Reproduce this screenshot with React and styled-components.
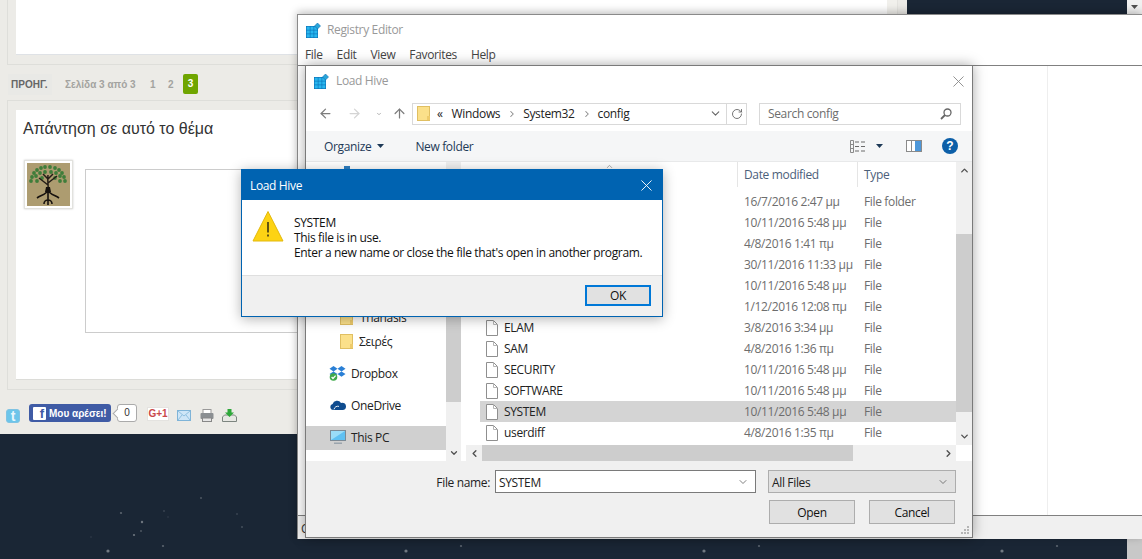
import React from "react";
import styled, { createGlobalStyle } from "styled-components";
import { ArrowLeft, ArrowRight, ArrowUp, ChevronDown, ChevronUp, ChevronLeft, ChevronRight, RotateCw } from "lucide-react";

const UI = `"Open Sans", "Noto Sans", sans-serif`;
const WEB = `"Liberation Sans", Arial, sans-serif`;

const GlobalStyle = createGlobalStyle`
  html, body { margin: 0; padding: 0; background: #1a2635; }
  * { box-sizing: border-box; }
`;

const Stage = styled.div`
  position: relative;
  width: 1142px;
  height: 559px;
  overflow: hidden;
  display: flex;
  background: #1a2635;
  font-family: ${UI};
`;

const PageColumn = styled.div`
  flex: 1;
  display: flex;
  flex-direction: column;
`;

const TopArea = styled.div`
  display: flex;
  height: 434px;
`;

const Forum = styled.div`
  width: 887px;
  background: #ecebe7;
  font-family: ${WEB};
  display: flex;
  flex-direction: column;
`;

const SideStrip = styled.div`
  width: 20px;
  background: linear-gradient(to right, #f1f0ec 0 10px, #e4e3df 10px 11px, #ecebe7 11px);
`;

const StarBand = styled.div`
  flex: 1;
  position: relative;
`;

const PageScroll = styled.div`
  width: 15px;
  background: #f1f1f1;
  display: flex;
  flex-direction: column;
  justify-content: space-between;
`;

const ScrollTip = styled.div`
  height: 14px;
  display: flex;
  align-items: center;
  justify-content: center;
`;

const ScrollEnd = styled.div`
  height: 20px;
  background: #c8c8c8;
`;

const OuterTop = styled.div`
  margin-left: 7px;
  height: 65px;
  padding: 0 0 9px 8px;
  border-left: 1px solid #dededa;
  border-bottom: 1px solid #dededa;
`;

const WhiteCard = styled.div`
  height: 100%;
  background: #fff;
  border-bottom: 1px solid #dfe2e6;
`;

const Pager = styled.div`
  height: 35px;
  display: flex;
  align-items: center;
  font-size: 10px;
  font-weight: bold;
  color: #a3a3a0;
  padding-top: 3px;
`;

const PrevLink = styled.span`
  margin-left: 8px;
  padding: 5px 3px;
  width: 44px;
  color: #666;
  background: #e9e9e6;
  white-space: nowrap;
`;

const PageLabel = styled.span`
  margin-left: 13px;
  width: 85px;
`;

const PageNum = styled.span`
  width: 18px;
`;

const CurrentPage = styled.span`
  width: 15px;
  height: 20px;
  margin-left: -3px;
  border-radius: 2px;
  background: #6fa500;
  color: #fff;
  display: flex;
  align-items: center;
  justify-content: center;
  margin-top: -1px;
`;

const OuterReply = styled.div`
  margin-left: 7px;
  height: 290px;
  padding: 9px 0 9px 8px;
  border: 1px solid #dededa;
  border-right: 0;
`;

const ReplyCard = styled.div`
  height: 100%;
  background: #fff;
  border-bottom: 1px solid #dcdcd8;
  padding: 9px 0 0 7px;
`;

const ReplyTitle = styled.div`
  font-size: 16px;
  line-height: 20px;
  color: #333;
`;

const ReplyBody = styled.div`
  display: flex;
  margin-top: 21px;
  margin-left: 1px;
`;

const Avatar = styled.div`
  width: 49px;
  height: 49px;
  padding: 2px;
  background: #fff;
  border: 1px solid #e2e2de;
  box-shadow: 0 0 2px rgba(0, 0, 0, 0.2);
  svg { display: block; }
`;

const Editor = styled.div`
  width: 700px;
  height: 164px;
  margin: 9px 0 0 12px;
  background: #fff;
  border: 1px solid #ccc;
`;

const ShareRow = styled.div`
  display: flex;
  align-items: flex-start;
  padding: 14px 0 0 6px;
`;

const ShareIcon = styled.div`
  margin-left: ${(p) => p.$gap || 0}px;
  margin-top: ${(p) => p.$top || 0}px;
  display: flex;
  svg { display: block; }
`;

const TwitterIcon = styled.div`
  width: 14px;
  height: 14px;
  margin-top: 5px;
  border: 1px solid #7fc3e3;
  border-radius: 3px;
  background: #6cc5ea;
  color: #e8f7fd;
  font-size: 14px;
  font-weight: bold;
  line-height: 12px;
  text-align: center;
`;

const LikeButton = styled.div`
  width: 82px;
  height: 18px;
  margin-left: 9px;
  padding-left: 4px;
  border-radius: 3px;
  background: #3f5ba5;
  color: #fff;
  font-size: 10px;
  font-weight: bold;
  display: flex;
  align-items: center;
  gap: 3px;
  white-space: nowrap;
`;

const LikeBox = styled.span`
  width: 13px;
  height: 13px;
  border-radius: 1px;
  background: #fff;
  color: #3f5ba5;
  font-size: 13px;
  line-height: 14px;
  text-align: right;
  padding-right: 2px;
`;

const LikeCount = styled.div`
  position: relative;
  width: 20px;
  height: 18px;
  margin-left: 6px;
  border: 1px solid #aaa;
  border-radius: 3px;
  background: #fff;
  font-size: 10px;
  color: #333;
  text-align: center;
  line-height: 16px;
  &::before {
    content: "";
    position: absolute;
    left: -4px;
    top: 5px;
    width: 6px;
    height: 6px;
    background: #fff;
    border-left: 1px solid #aaa;
    border-bottom: 1px solid #aaa;
    transform: rotate(45deg);
  }
`;

const PlusOne = styled.div`
  width: 22px;
  height: 14px;
  margin: 3px 0 0 10px;
  background: #fff;
  border: 1px solid #e4e3e0;
  color: #c9484a;
  font-size: 10px;
  font-weight: bold;
  line-height: 12px;
  text-align: center;
  white-space: nowrap;
`;

const Win = styled.div`
  position: absolute;
  left: ${(p) => p.$x}px;
  top: ${(p) => p.$y}px;
  width: ${(p) => p.$w}px;
  height: ${(p) => p.$h}px;
  display: flex;
  flex-direction: column;
  background: #fff;
  font-size: 12px;
  letter-spacing: -0.35px;
  color: #1a1a1a;
`;

const RegistryWin = styled(Win)`
  border-top: 1px solid #8a8a8a;
  border-left: 1px solid #8a8a8a;
  box-shadow: 0 -2px 8px rgba(0, 0, 0, 0.25);
`;

const DialogWin = styled(Win)`
  border: 1px solid #7a7a7a;
  box-shadow: 0 0 12px rgba(0, 0, 0, 0.35);
`;

const MessageWin = styled(Win)`
  border: 1px solid #0063b1;
  box-shadow: 0 2px 12px rgba(0, 0, 0, 0.3);
`;

const TitleText = styled.span`
  margin-bottom: 2px;
`;

const RegTitle = styled.div`
  height: 30px;
  padding-left: 8px;
  display: flex;
  align-items: center;
  gap: 6px;
  color: #999;
`;

const MenuBar = styled.div`
  height: 20px;
  padding: 0 0 2px 7px;
  display: flex;
  gap: 14px;
  align-items: center;
  color: #444;
`;

const RegBody = styled.div`
  flex: 1;
  display: flex;
  border-top: 1px solid #808080;
`;

const RegPane = styled.div`
  width: 750px;
  border-right: 1px solid #eee;
`;

const StatusBar = styled.div`
  height: 24px;
  padding: 4px 0 0 3px;
  background: #f0f0f0;
  border-top: 1px solid #808080;
  overflow: hidden;
  color: #333;
`;

const DialogTitle = styled.div`
  height: 30px;
  padding: 0 8px 0 8px;
  display: flex;
  align-items: center;
  gap: 7px;
  color: #999;
`;

const CloseMark = styled.div`
  margin-left: auto;
  display: flex;
`;

const NavRow = styled.div`
  height: 35px;
  padding: 0 11px 0 12px;
  display: flex;
  align-items: center;
  color: #8a8a8a;
`;

const NavButton = styled.div`
  width: ${(p) => p.$w}px;
  padding-left: ${(p) => p.$pad || 0}px;
  display: flex;
  justify-content: center;
  color: ${(p) => p.$color || "#7d7d7d"};
`;

const AddressBox = styled.div`
  width: 335px;
  height: 22px;
  border: 1px solid #d9d9d9;
  display: flex;
  align-items: center;
  padding-left: 4px;
  color: #222;
`;

const Crumb = styled.span`
  margin-left: ${(p) => p.$gap || 0}px;
`;

const CrumbArrow = styled.span`
  margin: 0 6px 0 7px;
  display: flex;
  color: #888;
`;

const AddressEnd = styled.div`
  margin-left: auto;
  display: flex;
  height: 100%;
  align-items: center;
`;

const Refresh = styled.div`
  width: 20px;
  height: 100%;
  margin-left: 4px;
  border-left: 1px solid #d9d9d9;
  display: flex;
  align-items: center;
  justify-content: center;
  color: #666;
`;

const SearchBox = styled.div`
  width: 202px;
  height: 22px;
  margin-left: 12px;
  padding: 0 8px;
  border: 1px solid #d9d9d9;
  display: flex;
  align-items: center;
  justify-content: space-between;
  color: #6d6d6d;
`;

const Toolbar = styled.div`
  height: 31px;
  padding: 0 14px 0 18px;
  display: flex;
  align-items: center;
  background: #f5f6f7;
  border-bottom: 1px solid #e8e9ea;
  color: #1e3a57;
`;

const ToolLabel = styled.span`
  display: flex;
  align-items: center;
  gap: 6px;
  margin-left: ${(p) => p.$gap || 0}px;
`;

const ToolIcons = styled.div`
  margin-left: auto;
  display: flex;
  align-items: center;
`;

const HelpDot = styled.div`
  width: 16px;
  height: 16px;
  margin-left: 20px;
  border-radius: 50%;
  background: #0c5fa8;
  color: #fff;
  font-family: ${WEB};
  font-size: 12px;
  font-weight: bold;
  line-height: 16px;
  text-align: center;
  letter-spacing: 0;
`;

const DialogMain = styled.div`
  height: 299px;
  display: flex;
`;

const Sidebar = styled.div`
  width: 140px;
  display: flex;
  flex-direction: column;
  padding-bottom: 11px;
  color: #222;
`;

const SidebarPeek = styled.div`
  width: 6px;
  height: 6px;
  margin: 4px 0 auto 38px;
  background: #2f7fc1;
`;

const SideRow = styled.div`
  height: 24px;
  flex: none;
  margin-top: ${(p) => p.$gap || 0}px;
  padding: 0 0 2px ${(p) => p.$indent}px;
  display: flex;
  align-items: center;
  gap: ${(p) => p.$iconGap}px;
  background: ${(p) => (p.$active ? "#d0d0d0" : "transparent")};
`;

const VScroll = styled.div`
  width: ${(p) => p.$w}px;
  height: ${(p) => p.$h}px;
  flex: none;
  display: flex;
  flex-direction: column;
  background: #f0f0f0;
`;

const ScrollArrow = styled.div`
  height: ${(p) => p.$h || 17}px;
  flex: none;
  display: flex;
  align-items: center;
  justify-content: center;
  color: #505050;
`;

const ScrollThumb = styled.div`
  height: ${(p) => p.$h}px;
  margin-top: ${(p) => p.$top || 0}px;
  flex: none;
  background: #cdcdcd;
`;

const ScrollGap = styled.div`
  flex: 1;
`;

const FilesPanel = styled.div`
  flex: 1;
  margin-left: 5px;
  display: grid;
  grid-template-columns: 1fr 16px;
  grid-template-rows: 283px 16px;
`;

const FileList = styled.div`
  padding-left: 14px;
  overflow: hidden;
`;

const ListHead = styled.div`
  height: 25px;
  margin-bottom: 4px;
  display: grid;
  grid-template-columns: 257px 120px 1fr;
  color: #4c607a;
`;

const HeadCell = styled.div`
  padding: 4px 0 0 6px;
  border-left: 1px solid #e5e5e5;
`;

const SortCell = styled.div`
  display: flex;
  justify-content: center;
  color: #777;
  padding-left: 2px;
`;

const FileRow = styled.div`
  height: 21px;
  display: grid;
  grid-template-columns: 257px 120px 1fr;
  align-items: center;
  background: ${(p) => (p.$active ? "#d4d4d4" : "transparent")};
`;

const NameCell = styled.div`
  padding-left: 6px;
  display: flex;
  align-items: center;
  gap: 6px;
  color: #222;
`;

const InfoCell = styled.div`
  padding-left: 7px;
  color: #6d6d6d;
  white-space: nowrap;
`;

const HScroll = styled.div`
  display: flex;
  background: #f0f0f0;
`;

const HArrow = styled.div`
  width: 16px;
  flex: none;
  display: flex;
  align-items: center;
  justify-content: center;
  color: #505050;
  margin-left: ${(p) => (p.$end ? "auto" : 0)};
`;

const HThumb = styled.div`
  width: 371px;
  background: #cdcdcd;
`;

const DialogFooter = styled.div`
  flex: 1;
  position: relative;
  background: #f0f0f0;
  padding: 9px 16px 0 0;
`;

const FieldRow = styled.div`
  display: flex;
  justify-content: flex-end;
  align-items: flex-start;
`;

const FieldLabel = styled.span`
  margin: 4px 5px 0 0;
  color: #222;
`;

const Field = styled.div`
  width: ${(p) => p.$w}px;
  height: 23px;
  margin-left: ${(p) => p.$gap || 0}px;
  padding: 1px 6px 0 3px;
  display: flex;
  align-items: center;
  justify-content: space-between;
  background: ${(p) => (p.$gray ? "#e1e1e1" : "#fff")};
  border: 1px solid ${(p) => (p.$gray ? "#adadad" : "#7a7a7a")};
  color: #222;
`;

const ButtonRow = styled.div`
  display: flex;
  justify-content: flex-end;
  gap: 14px;
  margin: 7px 1px 0 0;
`;

const WinButton = styled.button`
  width: ${(p) => p.$w}px;
  height: ${(p) => p.$h}px;
  padding: 0;
  font: inherit;
  letter-spacing: inherit;
  color: #111;
  background: #e1e1e1;
  border: ${(p) => (p.$primary ? "2px solid #0078d7" : "1px solid #adadad")};
`;

const Grip = styled.div`
  position: absolute;
  right: 2px;
  bottom: 2px;
  display: flex;
`;

const MsgTitle = styled.div`
  height: 30px;
  flex: none;
  padding: 0 10px 0 8px;
  display: flex;
  align-items: center;
  justify-content: space-between;
  background: #0063b1;
  color: #fff;
`;

const MsgBody = styled.div`
  flex: 1;
  display: flex;
  gap: 10px;
  padding: 10px 0 0 10px;
`;

const MsgText = styled.div`
  padding-top: 5px;
  line-height: 15px;
  white-space: nowrap;
  color: #111;
`;

const MsgFooter = styled.div`
  height: 41px;
  flex: none;
  padding: 9px 11px 0 0;
  display: flex;
  justify-content: flex-end;
  background: #f0f0f0;
  border-top: 1px solid #dfdfdf;
`;

const RegIcon = () => (
  <svg width="15" height="15" viewBox="0 0 15 15">
    <rect x="0" y="3" width="12" height="12" fill="#0a6fb5" />
    {[0, 1, 2].map((r) =>
      [0, 1, 2].map((c) => <rect key={`${r}-${c}`} x={0.6 + c * 3.8} y={3.6 + r * 3.8} width="3.2" height="3.2" fill="#29b6ee" />)
    )}
    <path d="M11.5 0l3 3-3 3-3-3z" fill="#2aa5d8" stroke="#0a6fb5" strokeWidth="0.6" />
  </svg>
);

const Folder = () => (
  <svg width="13" height="15" viewBox="0 0 13 15">
    <rect x="0.5" y="0.5" width="12" height="14" fill="#fbe08a" stroke="#e0bf62" />
    <rect x="10" y="10" width="3" height="4" fill="#eecb6b" />
  </svg>
);

const FileIcon = () => (
  <svg width="12" height="16" viewBox="0 0 12 16">
    <path d="M.5.5h7l4 4v11H.5z" fill="#fff" stroke="#8f8f8f" />
    <path d="M7.5.5v4h4" fill="none" stroke="#b5b5b5" />
  </svg>
);

const Dropbox = () => (
  <svg width="17" height="16" viewBox="0 0 17 16">
    <path d="M4.5 1L.5 3.7l4 2.7 4-2.7zM12.5 1l-4 2.7 4 2.7 4-2.7zM.5 9l4 2.7 4-2.7-4-2.6zM8.5 9l4 2.7 4-2.7-4-2.6z" fill="#2a7fd5" />
    <circle cx="4.5" cy="12" r="3.8" fill="#3fa94a" />
    <path d="M2.6 12l1.4 1.5 2.6-2.8" fill="none" stroke="#fff" strokeWidth="1.2" />
  </svg>
);

const OneDrive = () => (
  <svg width="16" height="10" viewBox="0 0 16 10">
    <path d="M3 10a3 3 0 0 1-.4-5.9A4.6 4.6 0 0 1 11 3a3.6 3.6 0 0 1 5 3.4A3.6 3.6 0 0 1 12.6 10z" fill="#0f4c8f" />
    <path d="M4 9.4c.6-2.6 2.8-3.6 5-3" fill="none" stroke="#fff" strokeWidth="0.9" />
  </svg>
);

const Monitor = () => (
  <svg width="16" height="15" viewBox="0 0 16 15">
    <rect x="0.5" y="0.5" width="15" height="10" fill="#5fc0f2" stroke="#7b8a96" />
    <path d="M1 1h14L1 10z" fill="#9adcf8" />
    <path d="M4 12.5h8v1.5H4z" fill="#9aa4ad" />
  </svg>
);

const Warning = () => (
  <svg width="32" height="32" viewBox="0 0 32 32">
    <path d="M16 1.5L31 31H1z" fill="#fdd314" stroke="#e3b90c" strokeLinejoin="round" />
    <path d="M16 12v10.5M16 24.5v2" stroke="#111" strokeWidth="1.3" />
  </svg>
);

const Close = ({ size, color }) => (
  <svg width={size} height={size} viewBox="0 0 12 12">
    <path d="M.5.5l11 11M11.5.5l-11 11" stroke={color} strokeWidth="1" fill="none" />
  </svg>
);

const Lens = () => (
  <svg width="12" height="12" viewBox="0 0 12 12">
    <circle cx="7.5" cy="4.5" r="3.5" fill="none" stroke="#666" strokeWidth="1.3" />
    <path d="M5 7l-4 4" stroke="#666" strokeWidth="1.8" />
  </svg>
);

const ViewIcon = () => (
  <svg width="16" height="13" viewBox="0 0 16 13">
    <path d="M.5.5h3v12h-3zM.5 4.5h3M.5 8.5h3" fill="none" stroke="#8a8a8a" />
    <path d="M5 2h4M11 2h4M5 6.5h4M11 6.5h4M5 11h4M11 11h4" stroke="#6a6a6a" />
  </svg>
);

const Caret = ({ color = "#1e3a57" }) => (
  <svg width="7" height="4" viewBox="0 0 7 4">
    <path d="M0 0h7L3.5 4z" fill={color} />
  </svg>
);

const UpCaret = () => (
  <svg width="9" height="5" viewBox="0 0 9 5">
    <path d="M0 5h9L4.5 0z" fill="#444" />
  </svg>
);

const PaneIcon = () => (
  <svg width="16" height="12" viewBox="0 0 16 12">
    <rect x="0.5" y="0.5" width="15" height="11" fill="#fff" stroke="#8a8a8a" />
    <rect x="9" y="1" width="6" height="10" fill="#4d97d9" />
    <path d="M5.5 1v10" stroke="#8a8a8a" />
  </svg>
);

const GripIcon = () => (
  <svg width="9" height="9" viewBox="0 0 9 9" fill="#b5b5b5">
    <rect x="6" y="0" width="2" height="2" />
    <rect x="3" y="3" width="2" height="2" />
    <rect x="6" y="3" width="2" height="2" />
    <rect x="0" y="6" width="2" height="2" />
    <rect x="3" y="6" width="2" height="2" />
    <rect x="6" y="6" width="2" height="2" />
  </svg>
);

const CANOPY = [
  [5, 14], [7, 10], [10, 7], [14, 5], [18, 4], [23, 4], [28, 5], [32, 7], [35, 10], [37, 14], [38, 18],
  [4, 18], [9, 13], [13, 10], [18, 9], [24, 9], [29, 10], [33, 13], [10, 18], [15, 15], [28, 15], [33, 18],
];

const TreeAvatar = () => (
  <svg width="43" height="43" viewBox="0 0 43 43">
    <rect width="43" height="43" fill="#ad9c70" />
    {CANOPY.map(([x, y]) => (
      <circle key={`${x}-${y}`} cx={x} cy={y} r="1.9" fill="#3f7d3a" />
    ))}
    <path d="M21 29c1-6-1-10 0-17M21 22l-9-7M21 20l9-7M21 16l-5-5M21 16l5-5" stroke="#241d17" strokeWidth="1.5" fill="none" />
    <path d="M21 27c-2 5-7 5-11 8M21 27c2 5 7 5 11 8M21 27v15M17 41a4 4 0 0 1 8 0" stroke="#17120e" strokeWidth="1.6" fill="none" />
    <path d="M19 24h4l1 5h-6z" fill="#17120e" />
  </svg>
);

const StarField = styled.svg`
  position: absolute;
  inset: 0;
  width: 100%;
  height: 100%;
`;

const STARS = [
  [108, 117, 1.6, 0.38], [121, 79, 1.1, 0.28], [142, 88, 1.2, 0.36], [134, 101, 1.1, 0.36], [141, 97, 1, 0.22],
  [163, 112, 1.1, 0.28], [201, 64, 1, 0.22], [164, 77, 0.9, 0.14], [237, 80, 0.9, 0.14], [242, 93, 1, 0.18],
  [168, 83, 0.8, 0.1], [91, 103, 0.8, 0.1],
];

const FILES = [
  { date: "16/7/2016 2:47 μμ", type: "File folder" },
  { date: "10/11/2016 5:48 μμ", type: "File" },
  { date: "4/8/2016 1:41 πμ", type: "File" },
  { date: "30/11/2016 11:33 μμ", type: "File" },
  { date: "10/11/2016 5:48 μμ", type: "File" },
  { date: "1/12/2016 12:08 πμ", type: "File" },
  { name: "ELAM", date: "3/8/2016 3:34 μμ", type: "File" },
  { name: "SAM", date: "4/8/2016 1:36 πμ", type: "File" },
  { name: "SECURITY", date: "10/11/2016 5:48 μμ", type: "File" },
  { name: "SOFTWARE", date: "10/11/2016 5:48 μμ", type: "File" },
  { name: "SYSTEM", date: "10/11/2016 5:48 μμ", type: "File", active: true },
  { name: "userdiff", date: "4/8/2016 1:35 πμ", type: "File" },
];

export default function App() {
  return (
    <Stage>
      <GlobalStyle />
      <PageColumn>
        <TopArea>
          <Forum>
            <OuterTop>
              <WhiteCard />
            </OuterTop>
            <Pager>
              <PrevLink>ΠΡΟΗΓ.</PrevLink>
              <PageLabel>Σελίδα 3 από 3</PageLabel>
              <PageNum>1</PageNum>
              <PageNum>2</PageNum>
              <CurrentPage>3</CurrentPage>
            </Pager>
            <OuterReply>
              <ReplyCard>
                <ReplyTitle>Απάντηση σε αυτό το θέμα</ReplyTitle>
                <ReplyBody>
                  <Avatar>
                    <TreeAvatar />
                  </Avatar>
                  <Editor />
                </ReplyBody>
              </ReplyCard>
            </OuterReply>
            <ShareRow>
              <TwitterIcon>t</TwitterIcon>
              <LikeButton>
                <LikeBox>f</LikeBox>
                Μου αρέσει!
              </LikeButton>
              <LikeCount>0</LikeCount>
              <PlusOne>G+1</PlusOne>
              <ShareIcon $gap={8} $top={6}>
                <svg width="14" height="11" viewBox="0 0 14 11">
                  <rect x="0.5" y="0.5" width="13" height="10" fill="#cfe6f7" stroke="#7fb4d8" />
                  <path d="M1 1l6 5 6-5M1 10l4-5M13 10L9 5" fill="none" stroke="#8fc0e0" />
                </svg>
              </ShareIcon>
              <ShareIcon $gap={9} $top={5}>
                <svg width="14" height="13" viewBox="0 0 14 13">
                  <rect x="3" y="0.5" width="8" height="4" fill="#fff" stroke="#999" />
                  <rect x="0.5" y="4" width="13" height="6" rx="1" fill="#8b8f92" />
                  <rect x="2.5" y="9" width="9" height="3.5" fill="#e6e6e6" stroke="#888" />
                </svg>
              </ShareIcon>
              <ShareIcon $gap={8} $top={5}>
                <svg width="15" height="13" viewBox="0 0 15 13">
                  <path d="M.5 8L2.5 6h10l2 2v4.5H.5z" fill="#e8e8e4" stroke="#7d8580" />
                  <path d="M5.5 0h4v3.5H12L7.5 8 3 3.5h2.5z" fill="#2ea83a" />
                </svg>
              </ShareIcon>
            </ShareRow>
          </Forum>
          <SideStrip />
        </TopArea>
        <StarBand>
          <StarField>
            <defs>
              <pattern id="stars" width="298" height="125" patternUnits="userSpaceOnUse">
                {STARS.map(([x, y, r, o]) => (
                  <circle key={`${x}-${y}`} cx={x} cy={y} r={r} fill="#fff" opacity={o} />
                ))}
              </pattern>
            </defs>
            <rect width="100%" height="100%" fill="url(#stars)" />
          </StarField>
        </StarBand>
      </PageColumn>
      <PageScroll>
        <ScrollTip>
          <Caret color="#505050" />
        </ScrollTip>
        <ScrollEnd />
      </PageScroll>

      <RegistryWin $x={297} $y={14} $w={845} $h={525}>
        <RegTitle>
          <RegIcon />
          <TitleText>Registry Editor</TitleText>
        </RegTitle>
        <MenuBar>
          <span>File</span>
          <span>Edit</span>
          <span>View</span>
          <span>Favorites</span>
          <span>Help</span>
        </MenuBar>
        <RegBody>
          <RegPane />
        </RegBody>
        <StatusBar>Computer</StatusBar>
      </RegistryWin>

      <DialogWin $x={305} $y={65} $w={668} $h={473}>
        <DialogTitle>
          <RegIcon />
          <TitleText>Load Hive</TitleText>
          <CloseMark>
            <Close size={11} color="#8a8a8a" />
          </CloseMark>
        </DialogTitle>
        <NavRow>
          <NavButton $w={15}>
            <ArrowLeft size={15} strokeWidth={2} />
          </NavButton>
          <NavButton $w={43} $color="#d4d4d4">
            <ArrowRight size={15} strokeWidth={2} />
          </NavButton>
          <NavButton $w={6} $color="#999">
            <ChevronDown size={10} strokeWidth={3} />
          </NavButton>
          <NavButton $w={30} $pad={4}>
            <ArrowUp size={15} strokeWidth={2} />
          </NavButton>
          <AddressBox>
            <Folder />
            <Crumb $gap={7}>«</Crumb>
            <Crumb $gap={9}>Windows</Crumb>
            <CrumbArrow>
              <ChevronRight size={10} strokeWidth={2.5} />
            </CrumbArrow>
            <Crumb>System32</Crumb>
            <CrumbArrow>
              <ChevronRight size={10} strokeWidth={2.5} />
            </CrumbArrow>
            <Crumb>config</Crumb>
            <AddressEnd>
              <ChevronDown size={13} strokeWidth={2} color="#666" />
              <Refresh>
                <RotateCw size={12} strokeWidth={1.8} />
              </Refresh>
            </AddressEnd>
          </AddressBox>
          <SearchBox>
            Search config
            <Lens />
          </SearchBox>
        </NavRow>
        <Toolbar>
          <ToolLabel>
            Organize
            <Caret />
          </ToolLabel>
          <ToolLabel $gap={31}>New folder</ToolLabel>
          <ToolIcons>
            <ViewIcon />
            <ToolLabel $gap={10}>
              <Caret />
            </ToolLabel>
            <ToolLabel $gap={23}>
              <PaneIcon />
            </ToolLabel>
            <HelpDot>?</HelpDot>
          </ToolIcons>
        </Toolbar>
        <DialogMain>
          <Sidebar>
            <SidebarPeek />
            <SideRow $indent={34} $iconGap={7}>
              <Folder />
              Thanasis
            </SideRow>
            <SideRow $indent={34} $iconGap={6}>
              <Folder />
              Σειρές
            </SideRow>
            <SideRow $gap={8} $indent={23} $iconGap={5}>
              <Dropbox />
              Dropbox
            </SideRow>
            <SideRow $gap={8} $indent={24} $iconGap={5}>
              <OneDrive />
              OneDrive
            </SideRow>
            <SideRow $gap={8} $indent={24} $iconGap={5} $active>
              <Monitor />
              This PC
            </SideRow>
          </Sidebar>
          <VScroll $w={15} $h={299}>
            <ScrollArrow>
              <ChevronUp size={10} strokeWidth={3} />
            </ScrollArrow>
            <ScrollThumb $h={223} />
            <ScrollGap />
            <ScrollArrow>
              <ChevronDown size={10} strokeWidth={3} />
            </ScrollArrow>
          </VScroll>
          <FilesPanel>
            <FileList>
              <ListHead>
                <SortCell>
                  <ChevronUp size={9} strokeWidth={1.5} />
                </SortCell>
                <HeadCell>Date modified</HeadCell>
                <HeadCell>Type</HeadCell>
              </ListHead>
              {FILES.map((f) => (
                <FileRow key={f.date + (f.name || f.type) + f.type} $active={f.active}>
                  <NameCell>
                    {f.name && <FileIcon />}
                    {f.name}
                  </NameCell>
                  <InfoCell>{f.date}</InfoCell>
                  <InfoCell>{f.type}</InfoCell>
                </FileRow>
              ))}
            </FileList>
            <VScroll $w={16} $h={283}>
              <ScrollArrow>
                <ChevronUp size={11} strokeWidth={3} />
              </ScrollArrow>
              <ScrollThumb $top={55} $h={178} />
              <ScrollGap />
              <ScrollArrow>
                <ChevronDown size={11} strokeWidth={3} />
              </ScrollArrow>
            </VScroll>
            <HScroll>
              <HArrow>
                <ChevronLeft size={11} strokeWidth={3} />
              </HArrow>
              <HThumb />
              <HArrow $end>
                <ChevronRight size={11} strokeWidth={3} />
              </HArrow>
            </HScroll>
          </FilesPanel>
        </DialogMain>
        <DialogFooter>
          <FieldRow>
            <FieldLabel>File name:</FieldLabel>
            <Field $w={261}>
              SYSTEM
              <ChevronDown size={12} strokeWidth={1.5} color="#555" />
            </Field>
            <Field $w={188} $gap={12} $gray>
              All Files
              <ChevronDown size={12} strokeWidth={1.5} color="#555" />
            </Field>
          </FieldRow>
          <ButtonRow>
            <WinButton $w={86} $h={24}>Open</WinButton>
            <WinButton $w={86} $h={24}>Cancel</WinButton>
          </ButtonRow>
          <Grip>
            <GripIcon />
          </Grip>
        </DialogFooter>
      </DialogWin>

      <MessageWin $x={241} $y={169} $w={422} $h={148}>
        <MsgTitle>
          Load Hive
          <Close size={11} color="#fff" />
        </MsgTitle>
        <MsgBody>
          <Warning />
          <MsgText>
            SYSTEM
            <br />
            This file is in use.
            <br />
            Enter a new name or close the file that's open in another program.
          </MsgText>
        </MsgBody>
        <MsgFooter>
          <WinButton $w={66} $h={21} $primary>OK</WinButton>
        </MsgFooter>
      </MessageWin>
    </Stage>
  );
}
